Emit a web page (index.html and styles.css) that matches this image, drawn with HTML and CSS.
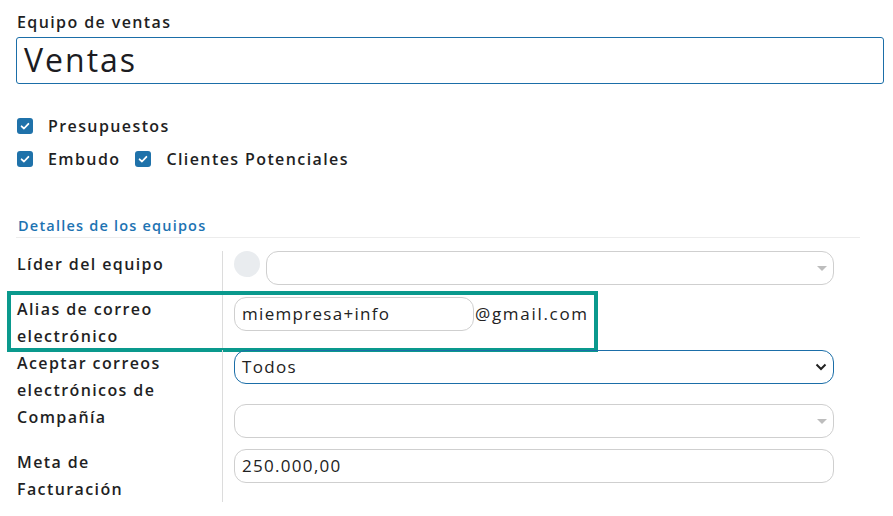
FILE: index.html
```html
<!DOCTYPE html>
<html lang="es">
<head>
<meta charset="utf-8">
<title>Equipo de ventas</title>
<link rel="stylesheet" href="styles.css">
</head>
<body>
<div class="sheet">
  <div class="title-label">Equipo de ventas</div>
  <div class="name-input">Ventas</div>

  <div class="checks">
    <div class="check-row">
      <label class="check"><span class="box"><svg viewBox="0 0 16 16"><path d="M4.6 8.3 L7 10.5 L11.4 5.8" /></svg></span><span class="check-text">Presupuestos</span></label>
    </div>
    <div class="check-row">
      <label class="check"><span class="box"><svg viewBox="0 0 16 16"><path d="M4.6 8.3 L7 10.5 L11.4 5.8" /></svg></span><span class="check-text">Embudo</span></label>
      <label class="check"><span class="box"><svg viewBox="0 0 16 16"><path d="M4.6 8.3 L7 10.5 L11.4 5.8" /></svg></span><span class="check-text">Clientes Potenciales</span></label>
    </div>
  </div>

  <div class="section-title">Detalles de los equipos</div>

  <div class="form">
    <div class="row row-leader">
      <div class="label">Líder del equipo</div>
      <div class="value">
        <span class="avatar"></span>
        <div class="field select grow"><span class="caret"></span></div>
      </div>
    </div>
    <div class="row row-alias">
      <div class="label">Alias de correo electrónico</div>
      <div class="value">
        <div class="field alias">miempresa+info</div>
        <span class="domain">@gmail.com</span>
      </div>
    </div>
    <div class="row row-accept">
      <div class="label">Aceptar correos electrónicos de</div>
      <div class="value">
        <div class="field select focus">Todos<svg class="chev" viewBox="0 0 12 8"><path d="M1.5 1.5 L6 6 L10.5 1.5"/></svg></div>
      </div>
    </div>
    <div class="row row-company">
      <div class="label">Compañía</div>
      <div class="value">
        <div class="field select"><span class="caret"></span></div>
      </div>
    </div>
    <div class="row row-goal">
      <div class="label">Meta de Facturación</div>
      <div class="value">
        <div class="field">250.000,00</div>
      </div>
    </div>
  </div>
</div>
</body>
</html>
```

FILE: styles.css
```css
*, *::before, *::after { box-sizing: border-box; }
html, body { margin: 0; padding: 0; background: #fff; }
body {
  font-family: "Open Sans", "Liberation Sans", sans-serif;
  color: #1f1f24;
}
.sheet {
  padding: 10px 9px 0 16px;
}
.title-label {
  font-size: 16px;
  font-weight: 600;
  line-height: 24px;
  padding-left: 1px;
  letter-spacing: 1.4px;
}
.name-input {
  margin-top: 3px;
  height: 47px;
  border: 1px solid #1b6ea8;
  border-radius: 3px;
  font-size: 32px;
  line-height: 44px;
  padding-left: 7px;
  color: #1c1c22;
  letter-spacing: 2px;
}
.checks {
  margin-top: 30px;
  display: flex;
  flex-direction: column;
  gap: 9px;
}
.check-row {
  display: flex;
  gap: 14px;
  height: 24px;
  align-items: center;
}
.check {
  display: flex;
  align-items: center;
  font-size: 16px;
  font-weight: 600;
  letter-spacing: 1.4px;
}
.box {
  width: 16px;
  height: 16px;
  margin-left: 1px;
  border-radius: 3px;
  background: #1f72aa;
  display: inline-flex;
}
.box svg { width: 16px; height: 16px; fill: none; stroke: #fff; stroke-width: 1.8; stroke-linecap: round; stroke-linejoin: round; }
.check-text { margin-left: 15px; }

.section-title {
  margin-top: 45px;
  margin-right: 24px;
  padding: 0 0 1px 2px;
  font-size: 14.5px;
  font-weight: 600;
  color: #1d73b2;
  line-height: 20px;
  letter-spacing: 1.2px;
  border-bottom: 1px solid #ececec;
}

.form {
  margin-top: 13px;
  display: flex;
  flex-direction: column;
}
.row {
  display: grid;
  grid-template-columns: 206px 1fr;
  position: relative;
}
.label {
  font-size: 16px;
  font-weight: 600;
  line-height: 27px;
  padding-left: 1px;
  padding-right: 28px;
  letter-spacing: 1.4px;
}
.value {
  border-left: 1px solid #dcdcdc;
  padding-left: 11px;
  display: flex;
  align-items: flex-start;
  padding-right: 50px;
}
.field {
  position: relative;
  height: 34px;
  flex: 1;
  border: 1px solid #cfcfcf;
  border-radius: 12px;
  font-size: 17px;
  line-height: 32px;
  padding-left: 7px;
  color: #222;
  letter-spacing: 1.3px;
}
.field.focus { border-color: #1b6ea8; }
.avatar {
  width: 26px;
  height: 26px;
  border-radius: 50%;
  background: #e9ecef;
  margin-right: 6px;
  flex: none;
}
.caret {
  position: absolute;
  right: 6px;
  top: 14px;
  width: 0; height: 0;
  border-left: 5px solid transparent;
  border-right: 5px solid transparent;
  border-top: 5px solid #bdbdbd;
}
.chev {
  position: absolute;
  right: 6px;
  top: 12px;
  width: 12px;
  height: 8px;
  fill: none;
  stroke: #222;
  stroke-width: 2;
}
.row-leader { height: 41px; }
.row-alias { height: 58px; }
.row-alias .value { padding-top: 5px; padding-right: 0; }
.row-alias .field.alias { flex: none; width: 240px; }
.domain { font-size: 17px; line-height: 34px; padding-left: 1px; color: #222; letter-spacing: 1.7px; }
.row-alias::after {
  content: "";
  position: absolute;
  left: -9px;
  top: -1px;
  width: 591px;
  height: 61px;
  border: 4px solid #0a998d;
  pointer-events: none;
}
.row-alias .label { padding-top: 4px; }
.row-accept { height: 54px; }
.row-company { height: 45px; }
.row-goal { height: 53px; }
```
